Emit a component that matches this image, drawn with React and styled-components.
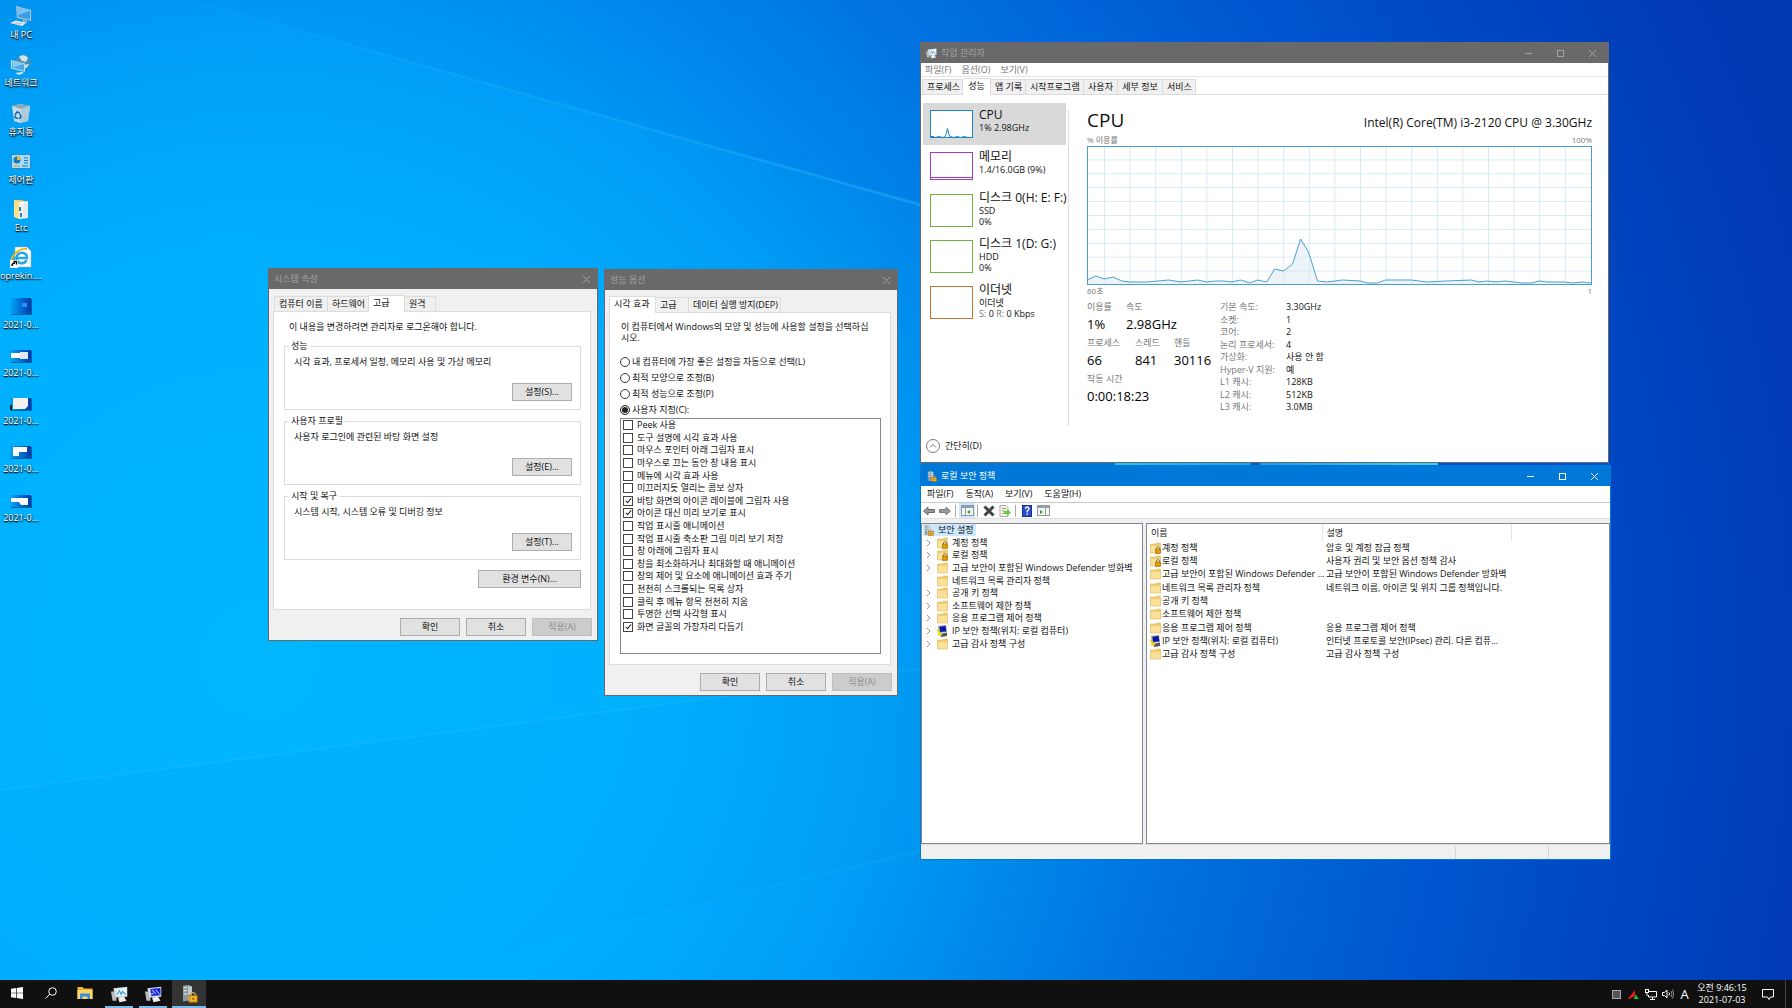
import React from "react";
import styled, { createGlobalStyle, css } from "styled-components";

const GlobalStyle = createGlobalStyle`
  *, *::before, *::after { box-sizing: border-box; }
  body { margin: 0; }
  body, button, input, table {
    font-family: "Open Sans", "Noto Sans CJK KR", sans-serif;
    font-size: 9px;
    line-height: 12px;
    color: #111;
  }
  ul, dl, dd, p, h2, h3 { margin: 0; padding: 0; font-weight: 400; }
  ul { list-style: none; }
  button { padding: 0; border: 0; background: none; white-space: nowrap; }
  svg { display: block; flex: none; }
`;

/* ---------- shell ---------- */
const Page = styled.div`
  display: flex;
  flex-direction: column;
  min-height: 100vh;
`;
const Desktop = styled.main`
  position: relative;
  flex: 1;
  display: flex;
  overflow: hidden;
  background: #0078e0;
`;
const WallpaperLayer = styled.svg`
  position: absolute;
  inset: 0;
  width: 100%;
  height: 100%;
`;
const IconColumn = styled.ul`
  position: relative;
  display: grid;
  grid-template-rows: repeat(11, 1fr);
  width: 42px;
  height: 531px;
`;
const Shortcut = styled.a`
  display: flex;
  flex-direction: column;
  align-items: center;
  padding-top: 5px;
  gap: 2px;
  color: #fff;
  text-decoration: none;
  white-space: nowrap;
  text-shadow: 0 1px 1px #000, 1px 1px 2px rgba(0, 0, 0, 0.8);
`;

/* ---------- window frame ---------- */
const Frame = styled.section`
  position: absolute;
  left: ${(p) => p.$x}px;
  top: ${(p) => p.$y}px;
  width: ${(p) => p.$w}px;
  ${(p) => p.$h && css`height: ${p.$h}px;`}
  display: flex;
  flex-direction: column;
  background: #fff;
  border: 1px solid ${(p) => (p.$active ? "#0078d7" : "#696969")};
`;
const TitleBar = styled.header`
  display: flex;
  align-items: center;
  flex: none;
  height: 20px;
  padding-left: 5px;
  background: ${(p) => (p.$active ? "#0078d7" : "#696969")};
  color: ${(p) => (p.$active ? "#fff" : "#a3a3a3")};
  & > svg { margin-right: 4px; }
`;
const Title = styled.h2`
  flex: 1;
  font-size: 9px;
  line-height: 12px;
`;
const Control = styled.button`
  display: flex;
  align-items: center;
  justify-content: center;
  width: ${(p) => (p.$narrow ? 22 : 32)}px;
  height: 20px;
  color: inherit;
`;
const Body = styled.div`
  padding: 6px 5px 4px 4px;
  background: #f0f0f0;
`;
const TabList = styled.div`
  display: flex;
  align-items: flex-end;
  height: 17px;
  margin-bottom: -1px;
  padding-left: ${(p) => p.$inset || 0}px;
  position: relative;
`;
const Tab = styled.button`
  width: ${(p) => p.$w}px;
  height: ${(p) => (p.$on ? 17 : 15)}px;
  margin-bottom: ${(p) => (p.$on ? 0 : 1)}px;
  padding: ${(p) => (p.$on ? "0 4px 2px" : "0 4px")};
  border: 1px solid #dcdcdc;
  border-bottom: 0;
  & + & { border-left-width: ${(p) => (p.$on ? 1 : 0)}px; }
  background: ${(p) => (p.$on ? "#fff" : "#f0f0f0")};
  text-align: ${(p) => p.$align || "left"};
`;
const Sheet = styled.div`
  display: flex;
  flex-direction: column;
  margin-right: 1px;
  padding: ${(p) => p.$pad};
  background: #fff;
  border: 1px solid #dcdcdc;
`;
const PushButton = styled.button`
  width: ${(p) => p.$w || 60}px;
  height: 18px;
  align-self: flex-end;
  background: ${(p) => (p.disabled ? "#ccc" : "#e1e1e1")};
  border: 1px solid ${(p) => (p.disabled ? "#bfbfbf" : "#adadad")};
  color: ${(p) => (p.disabled ? "#8c8c8c" : "#111")};
  line-height: 14px;
`;
const Actions = styled.footer`
  display: flex;
  justify-content: flex-end;
  gap: 6px;
  padding-top: 8px;
`;

/* ---------- system properties ---------- */
const Notice = styled.p`
  padding-left: 5px;
  margin-bottom: 7px;
`;
const Group = styled.fieldset`
  display: flex;
  flex-direction: column;
  min-width: 0;
  margin: 0 0 5px;
  padding: 4px 8px 8px 9px;
  border: 1px solid #dcdcdc;
  legend { margin-left: -5px; padding: 0 2px; }
  p { margin-bottom: 15px; }
`;
const Spacer = styled.div`
  height: ${(p) => p.$h}px;
`;

/* ---------- performance options ---------- */
const Intro = styled.p`
  margin: 0 8px 11px 1px;
  line-height: 11px;
`;
const Choice = styled.label`
  display: flex;
  align-items: center;
  height: ${(p) => (p.$row ? "auto" : "16px")};
  gap: ${(p) => (p.$row ? 4 : 2)}px;
`;
const Radio = styled.input.attrs({ type: "radio" })`
  appearance: none;
  width: 10px;
  height: 10px;
  margin: 0;
  border: 1px solid #333;
  border-radius: 50%;
  background: #fff;
  &:checked { box-shadow: inset 0 0 0 1px #fff; background: #222; }
`;
const Check = styled.input.attrs({ type: "checkbox" })`
  appearance: none;
  display: flex;
  justify-content: center;
  width: 10px;
  height: 10px;
  margin: 0;
  border: 1px solid #444;
  background: #fff;
  &:checked::after {
    content: "";
    width: 3px;
    height: 6px;
    border: solid #222;
    border-width: 0 1px 1px 0;
    transform: rotate(40deg);
  }
`;
const EffectBox = styled.div`
  height: 236px;
  padding-left: 2px;
  border: 1px solid #828790;
`;
const EffectRows = styled.div`
  display: grid;
  grid-auto-rows: 1fr;
  height: 214px;
`;

/* ---------- menus ---------- */
const MenuBar = styled.nav`
  display: flex;
  align-items: center;
  flex: none;
  gap: ${(p) => (p.$active ? 12 : 10)}px;
  height: ${(p) => (p.$active ? 17 : 14)}px;
  padding-left: ${(p) => (p.$active ? 6 : 4)}px;
  border-bottom: 1px solid ${(p) => (p.$active ? "#c8c8c8" : "#e6e6e6")};
  button { color: ${(p) => (p.$active ? "#111" : "#777")}; }
`;

/* ---------- task manager ---------- */
const TaskTabs = styled.div`
  padding-top: 1px;
  flex: none;
`;
const Monitor = styled.div`
  flex: 1;
  display: flex;
  border-top: 1px solid #dcdcdc;
`;
const Resources = styled.ul`
  width: 145px;
  flex: none;
  padding: 8px 0 0 2px;
`;
const Resource = styled.button`
  display: flex;
  gap: 6px;
  width: 143px;
  height: ${(p) => (p.$tall ? 46 : 42)}px;
  padding: ${(p) => (p.$tall ? 3 : 4)}px 0 0 7px;
  text-align: left;
  background: ${(p) => (p.$on ? "#d9d9d9" : "transparent")};
  svg { margin-top: ${(p) => (p.$tall ? 4 : 3)}px; }
`;
const ResourceText = styled.span`
  display: flex;
  flex-direction: column;
  line-height: 11px;
  strong { font-size: 12px; line-height: 15px; font-weight: 400; }
  i { color: #777; font-style: normal; }
`;
const Divider = styled.div`
  width: 1px;
  margin: 15px 0 0 2px;
  background: #dcdcdc;
`;
const Details = styled.div`
  flex: 1;
  padding: 12px 16px 0 18px;
`;
const DetailHead = styled.div`
  display: flex;
  justify-content: space-between;
  align-items: baseline;
  height: 27px;
  h3 { font-size: 19px; line-height: 26px; }
  span { font-size: 12px; }
`;
const AxisRow = styled.div`
  display: flex;
  justify-content: space-between;
  font-size: 8px;
  line-height: 12px;
  color: #777;
`;
const GraphSvg = styled.svg`
  width: 100%;
  height: 139px;
`;
const Figures = styled.div`
  display: flex;
  padding-top: 4px;
`;
const FigureBlock = styled.div`
  width: 133px;
  display: flex;
  flex-direction: column;
  gap: 4px;
`;
const FigureRow = styled.dl`
  display: grid;
  grid-template-columns: ${(p) => p.$cols};
  dt { color: #777; white-space: nowrap; }
  dd { margin-top: 2px; font-size: 13px; line-height: 18px; white-space: nowrap; color: #000; }
`;
const Facts = styled.dl`
  display: grid;
  grid-auto-rows: 1fr;
  height: 113px;
  div { display: grid; grid-template-columns: 66px auto; }
  dt { color: #777; white-space: nowrap; }
`;
const Fewer = styled.button`
  display: flex;
  align-items: center;
  align-self: flex-start;
  gap: 5px;
  height: 36px;
  padding: 3px 0 0 5px;
`;

/* ---------- security policy ---------- */
const ToolBar = styled.div`
  display: flex;
  align-items: center;
  flex: none;
  height: 15px;
`;
const Tool = styled.button`
  display: flex;
  align-items: center;
  justify-content: center;
  width: 16px;
  height: 15px;
  background: ${(p) => (p.$on ? "#cce8ff" : "none")};
`;
const ToolGap = styled.span`
  width: 1px;
  height: 12px;
  margin: 0 3px 0 2px;
  background: #aaa;
`;
const Strip = styled.div`
  flex: none;
  height: 5px;
  background: #f0f0f0;
  border-top: 1px solid #e0e0e0;
`;
const Panes = styled.div`
  flex: 1;
  display: flex;
  gap: 3px;
  background: #f0f0f0;
`;
const Pane = styled.div`
  ${(p) => (p.$w ? css`width: ${p.$w}px; flex: none;` : css`flex: 1;`)}
  background: #fff;
  border: 1px solid #828790;
`;
const Tree = styled.ul`
  display: grid;
  grid-auto-rows: 1fr;
  height: 126px;
`;
const Node = styled.li`
  display: flex;
  align-items: center;
  padding-left: ${(p) => (p.$root ? 1 : 4)}px;
`;
const Twist = styled.span`
  display: flex;
  width: 11px;
`;
const NodeButton = styled.button`
  display: flex;
  align-items: center;
  gap: 4px;
  height: 12px;
  padding-right: 3px;
  background: ${(p) => (p.$on ? "#cce8ff" : "none")};
`;
const PolicyTable = styled.table`
  width: 100%;
  border-collapse: collapse;
  table-layout: fixed;
  height: 137px;
  th, td { padding: 0 0 0 4px; text-align: left; font-weight: 400; white-space: nowrap; }
  thead tr { height: 17px; }
  th { border-right: 1px solid #e5e5e5; }
  th:last-child { border-right: 0; }
  td:first-child { padding-left: 3px; }
`;
const NameCell = styled.span`
  display: flex;
  align-items: center;
  gap: 1px;
`;
const StatusBar = styled.footer`
  display: flex;
  flex: none;
  height: 15px;
  background: #f0f0f0;
  border-top: 1px solid #dcdcdc;
  span { border-left: 1px solid #d5d5d5; margin-top: 1px; }
  span:nth-child(1) { flex: 1; border: 0; }
  span:nth-child(2) { width: 93px; }
  span:nth-child(3) { width: 62px; }
`;
const Sliver = styled.div`
  position: absolute;
  left: 921px;
  top: 463px;
  width: 689px;
  height: 2px;
  background: linear-gradient(90deg, #0078d7 194px, #22c4f2 194px, #18a8e8 330px, #0a58c0 330px, #0a58c0 339px, #1f9fe6 339px, #3fd0ee 517px, #0050d8 517px);
`;

/* ---------- taskbar ---------- */
const TaskBar = styled.footer`
  display: flex;
  height: 28px;
  background: #101010;
`;
const TaskButton = styled.button`
  display: flex;
  align-items: center;
  justify-content: center;
  width: 34px;
  padding-bottom: ${(p) => (p.$open ? 0 : 2)}px;
  margin-left: ${(p) => (p.$on ? 2 : 0)}px;
  background: ${(p) => (p.$on ? "#333" : "none")};
  ${(p) => p.$open && css`
    background-image: linear-gradient(#76b9ed, #76b9ed);
    background-size: ${p.$on ? 34 : 28}px 2px;
    background-position: bottom center;
    background-repeat: no-repeat;
  `}
`;
const Tray = styled.div`
  display: flex;
  align-items: center;
  margin-left: auto;
`;
const TrayButton = styled.button`
  display: flex;
  align-items: center;
  justify-content: center;
  width: ${(p) => p.$w || 17}px;
  height: 28px;
  color: #fff;
  font-size: 13px;
`;
const Clock = styled.button`
  width: 58px;
  color: #fff;
  text-align: center;
  span { display: block; }
`;
const ShowDesktop = styled.button`
  width: 7px;
  height: 28px;
  border-left: 1px solid #444;
`;

/* ---------- drawings ---------- */
const Wallpaper = () => (
  <WallpaperLayer viewBox="0 0 1792 980" preserveAspectRatio="none" aria-hidden="true">
    <defs>
      <radialGradient id="sky" gradientUnits="userSpaceOnUse" cx="260" cy="660" r="1600">
        <stop offset="0" stopColor="#00b6ff" />
        <stop offset="0.25" stopColor="#00b0ff" />
        <stop offset="0.4" stopColor="#009cf5" />
        <stop offset="0.5" stopColor="#0084e8" />
        <stop offset="0.6" stopColor="#006edd" />
        <stop offset="0.75" stopColor="#0054cf" />
        <stop offset="0.86" stopColor="#0046c2" />
        <stop offset="1" stopColor="#0038b2" />
      </radialGradient>
      <linearGradient id="beam" x1="0" y1="0" x2="1" y2="0">
        <stop offset="0" stopColor="#3cf" stopOpacity="0.05" />
        <stop offset="1" stopColor="#3bf" stopOpacity="0.4" />
      </linearGradient>
      <linearGradient id="shade" x1="0" y1="0" x2="1" y2="0">
        <stop offset="0" stopColor="#0070e8" stopOpacity="0.05" />
        <stop offset="1" stopColor="#0060e0" stopOpacity="0.2" />
      </linearGradient>
    </defs>
    <rect width="1792" height="980" fill="url(#sky)" />
    <polygon points="190,0 1100,0 1100,256" fill="url(#shade)" />
    <polygon points="185,0 192,0 930,206 930,209" fill="url(#beam)" />
    <polygon points="0,790 720,697 920,669 920,852 560,937 420,980 0,980" fill="#0098e8" opacity="0.08" />
    <polygon points="0,789 720,696 920,668 920,670 720,698 0,791" fill="#5cf" opacity="0.14" />
    <polygon points="560,936 920,850 920,852 560,937" fill="#5cf" opacity="0.12" />
  </WallpaperLayer>
);

const MiniPc = ({ size = 22 }) => (
  <svg width={size} height={size} viewBox="0 0 22 22">
    <path d="M6 1l15 4v11L7 13z" fill="#b9c6ce" />
    <path d="M7 2.300l13 3.500v9L8 12z" fill="#3b9fe6" />
    <path d="M7 2.300l13 3.500L8 10z" fill="#79c2f4" />
    <path d="M13 15l4 1v2l-5-1z" fill="#aeb7bd" />
    <path d="M0 18l6-2.500 10 2.500-4 3z" fill="#e9edef" />
    <path d="M3 18.200l3-1 7 1.300-2 1z" fill="#b9c2c8" />
  </svg>
);
const NetworkIcon = () => (
  <svg width="22" height="22" viewBox="0 0 22 22">
    <circle cx="13.500" cy="9" r="7.500" fill="#4590b4" />
    <path d="M9 4c3-3 7-2 9 1l-2 4-4-1zM14 12l5-1c-1 3-3 4-5 5z" fill="#cde6ef" />
    <path d="M1 7l14 3.500V19L1 15.500z" fill="#d0d8dd" />
    <path d="M2 8.300l12 3v6.400l-12-3z" fill="#4aa9e8" />
    <path d="M2 8.300l12 3-11 3z" fill="#83c8f3" />
    <path d="M5 20l7-1 2 1-5 2z" fill="#dbe1e5" />
  </svg>
);
const BinIcon = () => (
  <svg width="22" height="22" viewBox="0 0 22 22">
    <path d="M2 4l8-2 10 2-2 15-8 2-6-2z" fill="#c8dce8" />
    <path d="M2 4l8-2 10 2-9 3z" fill="#86a9bd" />
    <path d="M11 7l9-3-2 15-8 2z" fill="#aecbdb" />
    <path d="M5 13l2-3 3 1M10 12l1 3-2 2M8 16.500l-3-1v-2" stroke="#0b64b4" strokeWidth="1.500" fill="none" />
  </svg>
);
const PanelIcon = () => (
  <svg width="22" height="22" viewBox="0 0 22 22">
    <rect x="1" y="4" width="20" height="15" fill="#2c88c7" />
    <rect x="2" y="5" width="18" height="13" fill="#a6dcf6" />
    <circle cx="7" cy="10" r="3.500" fill="#1478c2" />
    <path d="M7 10V6.500A3.500 3.500 0 0 1 10.500 10z" fill="#ffb900" />
    <path d="M14 8h4M14 10.500h4M14 13h4" stroke="#1478c2" />
    <path d="M4 16h6" stroke="#ff9c00" />
    <path d="M12 16h6" stroke="#1478c2" />
  </svg>
);
const EtcIcon = () => (
  <svg width="22" height="22" viewBox="0 0 22 22">
    <path d="M4 2h8l2 1v16H4z" fill="#f3c95a" />
    <path d="M9 4l9-1v17l-9 1z" fill="#f7f9fa" />
    <path d="M4 2l5 2v17l-5-2z" fill="#ffe08a" />
    <path d="M13 6l5-1v14l-5 1z" fill="#e4eaee" />
    <path d="M10 9v4M11 15v4" stroke="#1b82c9" strokeWidth="2" />
  </svg>
);
const IeIcon = () => (
  <svg width="22" height="22" viewBox="0 0 22 22">
    <path d="M5 1h12l4 4v16H5z" fill="#fff" stroke="#9aa" strokeWidth="0.500" />
    <path d="M6 12h11c0-7-10-7-10.500 0 0 6 8 7 10 2" fill="none" stroke="#27a6e5" strokeWidth="2.600" />
    <path d="M2 17C-1 14 6 2 17 3" fill="none" stroke="#f5b800" strokeWidth="1.800" />
    <rect x="0" y="14" width="8" height="8" fill="#fff" />
    <path d="M2 20c0-2 1-3 3-3M3.500 15.500h3v3" fill="none" stroke="#000" strokeWidth="1.400" />
  </svg>
);
const Shot = ({ shapes, tall }) => (
  <svg width="22" height="22" viewBox="0 0 22 22">
    <defs>
      <linearGradient id="shotfill" x1="0" x2="1"><stop offset="0" stopColor="#00a8f8" /><stop offset="1" stopColor="#0038b0" /></linearGradient>
    </defs>
    <rect x="1" y={tall ? 4 : 8} width="21" height={tall ? 16 : 12} fill="#023" opacity="0.500" />
    <rect x="0" y={tall ? 3 : 7} width="21" height={tall ? 16 : 12} fill="url(#shotfill)" />
    {shapes.map((s, i) => <path key={i} d={s[0]} fill={s[1]} />)}
  </svg>
);
const FolderIcon = ({ lock }) => (
  <svg width="11" height="12" viewBox="0 0 11 12">
    <path d="M0.500 2h5l1-1h4v10h-10z" fill="#f3cd6c" stroke="#d3b05a" strokeWidth="0.500" />
    <path d="M1 4h9v6.500H1z" fill="#fbe09a" />
    {lock && <g><path d="M6.500 7.500v-2q1.500-2 3 0v2" fill="none" stroke="#777" strokeWidth="1" /><rect x="5.500" y="7" width="5" height="4.500" fill="#e39a00" stroke="#8a5b00" strokeWidth="0.500" /></g>}
  </svg>
);
const IpIcon = () => (
  <svg width="11" height="12" viewBox="0 0 11 12">
    <path d="M1 1l8-1 1 7-8 1z" fill="#999" />
    <path d="M2.500 1.800l6-.8.8 5.200-6 .8z" fill="#0a18a8" />
    <path d="M3 9l7-1.500V11l-6 1z" fill="#555" />
    <path d="M0.500 4.500L3 9M1 9.500h4" stroke="#e8d800" strokeWidth="1.800" fill="none" />
  </svg>
);
const ServerIcon = ({ size = 12 }) => (
  <svg width={size} height={size} viewBox="0 0 24 24">
    <path d="M4 1l6-1v21l-6 1z" fill="#8d979c" />
    <path d="M10 0l6 2v20l-6-1z" fill="#c3cacd" />
    <path d="M5 4l4-1M5 8l4-1M5 12h4" stroke="#e8f4e8" strokeWidth="1.500" />
    <path d="M14.500 15v-3q3-4 6 0v3" fill="none" stroke="#b8a070" strokeWidth="2" />
    <rect x="12" y="14" width="11" height="9" fill="#f0ae26" stroke="#9a6500" />
    <path d="M17.500 17v3" stroke="#7a4d00" strokeWidth="1.500" />
  </svg>
);
const MonitorIcon = ({ size = 11, blue }) => (
  <svg width={size} height={size} viewBox="0 0 22 22">
    <path d="M0 7h7v12H2z" fill="#b7bcbf" />
    <path d="M3 3l18-2v13L6 15z" fill="#d9dde0" />
    <path d="M7 4l13-1.500V12L8 13z" fill={blue ? "#1522d8" : "#e9f6fd"} />
    {blue
      ? <path d="M9 5l5 5M14 5l5 6M8 11l3-2" stroke="#a9b4ff" strokeWidth="1.400" />
      : <path d="M8 11l3-5 2 5 2-4 4 4" fill="none" stroke="#37a0d8" strokeWidth="1.400" />}
    <path d="M9 15l8-1 3 5-9 2z" fill="#eceeef" />
  </svg>
);
const Glyph = ({ kind }) => (
  <svg width="9" height="9" viewBox="0 0 9 9" fill="none" stroke="currentColor">
    {kind === "min" && <path d="M1 4.500h7" />}
    {kind === "max" && <rect x="1.500" y="1.500" width="6" height="6" />}
    {kind === "close" && <path d="M1 1l7 7M8 1l-7 7" />}
  </svg>
);

const CPU_POINTS = "0,134 9,130 17,133 26,131 35,135 43,136 60,136 82,134 94,136 111,134 120,136 129,135 137,135 145,136 154,134 163,137 171,134 180,136 188,123 197,125 206,118 214,93 222,106 231,135 241,136 256,134 274,135 281,137 291,137 299,134 325,134 341,136 360,135 385,134 393,136 401,135 410,136 419,135 436,137 445,137 453,135 461,136 478,136 487,137 496,136 505,137";
const range = (n) => Array.from({ length: n }, (_, i) => i);

const CpuGraph = () => (
  <GraphSvg viewBox="0 0 506 139" preserveAspectRatio="none">
    <rect width="506" height="139" fill="#fff" />
    {range(19).map((i) => <path key={i} d={`M${17.5 + i * 25.65} 0V139`} stroke="#d9eaf4" />)}
    {range(9).map((i) => <path key={i} d={`M0 ${13.9 * (i + 1)}H506`} stroke="#d9eaf4" />)}
    <polygon points={`0,138 ${CPU_POINTS} 505,138`} fill="#dce9f3" opacity="0.5" />
    <polyline points={CPU_POINTS} fill="none" stroke="#4ba0d0" />
    <rect x="0.5" y="0.5" width="505" height="138" fill="none" stroke="#4a9fd0" />
  </GraphSvg>
);
const Thumb = ({ color, h, kind }) => (
  <svg width="43" height={h} viewBox={`0 0 43 ${h}`} fill="none" stroke={color}>
    <rect x="0.5" y="0.5" width="42" height={h - 1} fill="#fff" />
    {kind === "cpu" && <path d="M1 26.500h3l1 1 4-1 4 1 2-1 1-2 1.500-6 1.500 6 1 2 4 1 3-1 4 1 3-1 4 1" />}
    {kind === "mem" && <path d="M1 25.500h41" />}
  </svg>
);

/* ---------- content ---------- */
const SHORTCUTS = [
  ["내 PC", <MiniPc />],
  ["네트워크", <NetworkIcon />],
  ["휴지통", <BinIcon />],
  ["제어판", <PanelIcon />],
  ["Etc", <EtcIcon />],
  ["oprekin....", <IeIcon />],
  ["2021-0...", <Shot tall shapes={[["M12 8h5v4h-5z", "#2a90f0"]]} />],
  ["2021-0...", <Shot shapes={[["M1 10h10v5H1z", "#fff"], ["M10 9h8v7h-8z", "#dfe8f2"]]} />],
  ["2021-0...", <Shot shapes={[["M3 7h15v8l-3 3H3z", "#f2f2f2"], ["M0 14h2v5H0z", "#222"]]} />],
  ["2021-0...", <Shot shapes={[["M3 8h14v5H9v4H3z", "#fff"]]} />],
  ["2021-0...", <Shot shapes={[["M1 10h17v7h-7l-2-3H1z", "#fff"]]} />],
];
const GROUPS = [
  ["성능", "시각 효과, 프로세서 일정, 메모리 사용 및 가상 메모리", "설정(S)..."],
  ["사용자 프로필", "사용자 로그인에 관련된 바탕 화면 설정", "설정(E)..."],
  ["시작 및 복구", "시스템 시작, 시스템 오류 및 디버깅 정보", "설정(T)..."],
];
const MODES = [
  "내 컴퓨터에 가장 좋은 설정을 자동으로 선택(L)",
  "최적 모양으로 조정(B)",
  "최적 성능으로 조정(P)",
  "사용자 지정(C):",
];
const EFFECTS = [
  ["Peek 사용"], ["도구 설명에 시각 효과 사용"], ["마우스 포인터 아래 그림자 표시"],
  ["마우스로 끄는 동안 창 내용 표시"], ["메뉴에 시각 효과 사용"], ["미끄러지듯 열리는 콤보 상자"],
  ["바탕 화면의 아이콘 레이블에 그림자 사용", true], ["아이콘 대신 미리 보기로 표시", true],
  ["작업 표시줄 애니메이션"], ["작업 표시줄 축소판 그림 미리 보기 저장"], ["창 아래에 그림자 표시"],
  ["창을 최소화하거나 최대화할 때 애니메이션"], ["창의 제어 및 요소에 애니메이션 효과 주기"],
  ["천천히 스크롤되는 목록 상자"], ["클릭 후 메뉴 항목 천천히 지움"], ["투명한 선택 사각형 표시"],
  ["화면 글꼴의 가장자리 다듬기", true],
];
const FACTS = [
  ["기본 속도:", "3.30GHz"], ["소켓:", "1"], ["코어:", "2"], ["논리 프로세서:", "4"],
  ["가상화:", "사용 안 함"], ["Hyper-V 지원:", "예"], ["L1 캐시:", "128KB"],
  ["L2 캐시:", "512KB"], ["L3 캐시:", "3.0MB"],
];
const POLICIES = [
  { name: "계정 정책", desc: "암호 및 계정 잠금 정책", icon: <FolderIcon lock />, open: true },
  { name: "로컬 정책", desc: "사용자 권리 및 보안 옵션 정책 감사", icon: <FolderIcon lock />, open: true },
  { name: "고급 보안이 포함된 Windows Defender 방화벽", short: "고급 보안이 포함된 Windows Defender ...", desc: "고급 보안이 포함된 Windows Defender 방화벽", icon: <FolderIcon />, open: true },
  { name: "네트워크 목록 관리자 정책", desc: "네트워크 이름, 아이콘 및 위치 그룹 정책입니다.", icon: <FolderIcon /> },
  { name: "공개 키 정책", desc: "", icon: <FolderIcon />, open: true },
  { name: "소프트웨어 제한 정책", desc: "", icon: <FolderIcon />, open: true },
  { name: "응용 프로그램 제어 정책", desc: "응용 프로그램 제어 정책", icon: <FolderIcon />, open: true },
  { name: "IP 보안 정책(위치: 로컬 컴퓨터)", desc: "인터넷 프로토콜 보안(IPsec) 관리. 다른 컴퓨...", icon: <IpIcon />, open: true },
  { name: "고급 감사 정책 구성", desc: "고급 감사 정책 구성", icon: <FolderIcon />, open: true },
];

/* ---------- windows ---------- */
const Buttons = () => (
  <Actions>
    <PushButton>확인</PushButton>
    <PushButton>취소</PushButton>
    <PushButton disabled>적용(A)</PushButton>
  </Actions>
);
const Controls = () => (
  <>
    <Control aria-label="최소화"><Glyph kind="min" /></Control>
    <Control aria-label="최대화"><Glyph kind="max" /></Control>
    <Control aria-label="닫기"><Glyph kind="close" /></Control>
  </>
);

const SystemProperties = () => (
  <Frame $x={268} $y={268} $w={330}>
    <TitleBar>
      <Title>시스템 속성</Title>
      <Control $narrow aria-label="닫기"><Glyph kind="close" /></Control>
    </TitleBar>
    <Body>
      <TabList role="tablist" $inset={1}>
        <Tab role="tab" $w={54}>컴퓨터 이름</Tab>
        <Tab role="tab" $w={41}>하드웨어</Tab>
        <Tab role="tab" $w={36} $on aria-selected="true">고급</Tab>
        <Tab role="tab" $w={31}>원격</Tab>
      </TabList>
      <Sheet $pad="9px 9px 21px 10px">
        <Notice>이 내용을 변경하려면 관리자로 로그온해야 합니다.</Notice>
        {GROUPS.map(([name, text, action]) => (
          <Group key={name}>
            <legend>{name}</legend>
            <p>{text}</p>
            <PushButton>{action}</PushButton>
          </Group>
        ))}
        <Spacer $h={5} />
        <PushButton $w={103}>환경 변수(N)...</PushButton>
      </Sheet>
      <Buttons />
    </Body>
  </Frame>
);

const PerformanceOptions = () => (
  <Frame $x={604} $y={269} $w={294}>
    <TitleBar>
      <Title>성능 옵션</Title>
      <Control $narrow aria-label="닫기"><Glyph kind="close" /></Control>
    </TitleBar>
    <Body>
      <TabList role="tablist">
        <Tab role="tab" $w={47} $on aria-selected="true">시각 효과</Tab>
        <Tab role="tab" $w={33}>고급</Tab>
        <Tab role="tab" $w={92}>데이터 실행 방지(DEP)</Tab>
      </TabList>
      <Sheet $pad="8px 9px 10px 10px">
        <Intro>이 컴퓨터에서 Windows의 모양 및 성능에 사용할 설정을 선택하십<br />시오.</Intro>
        {MODES.map((m, i) => (
          <Choice key={m}><Radio name="mode" defaultChecked={i === 3} />{m}</Choice>
        ))}
        <EffectBox>
          <EffectRows>
            {EFFECTS.map(([text, on]) => (
              <Choice $row key={text}><Check defaultChecked={!!on} />{text}</Choice>
            ))}
          </EffectRows>
        </EffectBox>
      </Sheet>
      <Buttons />
    </Body>
  </Frame>
);

const TaskManager = () => (
  <Frame $x={920} $y={42} $w={689} $h={421}>
    <TitleBar>
      <MonitorIcon />
      <Title>작업 관리자</Title>
      <Controls />
    </TitleBar>
    <MenuBar>
      <button>파일(F)</button><button>옵션(O)</button><button>보기(V)</button>
    </MenuBar>
    <TaskTabs>
      <TabList role="tablist" $inset={1}>
        <Tab role="tab" $align="center" $w={41}>프로세스</Tab>
        <Tab role="tab" $align="center" $w={28} $on aria-selected="true">성능</Tab>
        <Tab role="tab" $align="center" $w={35}>앱 기록</Tab>
        <Tab role="tab" $align="center" $w={58}>시작프로그램</Tab>
        <Tab role="tab" $align="center" $w={34}>사용자</Tab>
        <Tab role="tab" $align="center" $w={45}>세부 정보</Tab>
        <Tab role="tab" $align="center" $w={33}>서비스</Tab>
      </TabList>
    </TaskTabs>
    <Monitor>
      <Resources>
        <li><Resource $on><Thumb color="#1f86bf" h={28} kind="cpu" /><ResourceText><strong>CPU</strong><span>1% 2.98GHz</span></ResourceText></Resource></li>
        <li><Resource><Thumb color="#a03cc4" h={28} kind="mem" /><ResourceText><strong>메모리</strong><span>1.4/16.0GB (9%)</span></ResourceText></Resource></li>
        <li><Resource $tall><Thumb color="#6db33f" h={33} /><ResourceText><strong>디스크 0(H: E: F:)</strong><span>SSD</span><span>0%</span></ResourceText></Resource></li>
        <li><Resource $tall><Thumb color="#6db33f" h={33} /><ResourceText><strong>디스크 1(D: G:)</strong><span>HDD</span><span>0%</span></ResourceText></Resource></li>
        <li><Resource $tall><Thumb color="#bf7430" h={33} /><ResourceText><strong>이더넷</strong><span>이더넷</span><span><i>S:</i> 0 <i>R:</i> 0 Kbps</span></ResourceText></Resource></li>
      </Resources>
      <Divider />
      <Details>
        <DetailHead><h3>CPU</h3><span>Intel(R) Core(TM) i3-2120 CPU @ 3.30GHz</span></DetailHead>
        <AxisRow><span>% 이용률</span><span>100%</span></AxisRow>
        <CpuGraph />
        <AxisRow><span>60초</span><span>1</span></AxisRow>
        <Figures>
          <FigureBlock>
            <FigureRow $cols="39px auto">
              <div><dt>이용률</dt><dd>1%</dd></div>
              <div><dt>속도</dt><dd>2.98GHz</dd></div>
            </FigureRow>
            <FigureRow $cols="48px 39px auto">
              <div><dt>프로세스</dt><dd>66</dd></div>
              <div><dt>스레드</dt><dd>841</dd></div>
              <div><dt>핸들</dt><dd>30116</dd></div>
            </FigureRow>
            <FigureRow $cols="auto">
              <div><dt>작동 시간</dt><dd>0:00:18:23</dd></div>
            </FigureRow>
          </FigureBlock>
          <Facts>
            {FACTS.map(([k, v]) => <div key={k}><dt>{k}</dt><dd>{v}</dd></div>)}
          </Facts>
        </Figures>
      </Details>
    </Monitor>
    <Fewer>
      <svg width="14" height="14" viewBox="0 0 14 14" fill="none" stroke="#777">
        <circle cx="7" cy="7" r="6.500" /><path d="M4 8.500l3-3 3 3" />
      </svg>
      간단히(D)
    </Fewer>
  </Frame>
);

const ListGlyph = ({ right }) => (
  <svg width="13" height="11" viewBox="0 0 13 11">
    <rect x="0.500" y="0.500" width="12" height="10" fill="#f4f4f4" stroke="#999" />
    <path d="M1 2h11" stroke="#8fa0b0" strokeWidth="2" />
    <path d={right ? "M8.500 3v7" : "M4.500 3v7"} stroke="#999" />
    <path d={right ? "M3 5l3 2-3 2z" : "M9 5L6 7l3 2z"} fill="#2ca02c" />
  </svg>
);

const SecurityPolicy = () => (
  <Frame $active $x={920} $y={465} $w={691} $h={395}>
    <TitleBar $active>
      <ServerIcon size={11} />
      <Title>로컬 보안 정책</Title>
      <Controls />
    </TitleBar>
    <MenuBar $active>
      <button>파일(F)</button><button>동작(A)</button><button>보기(V)</button><button>도움말(H)</button>
    </MenuBar>
    <ToolBar>
      <Tool aria-label="뒤로"><svg width="12" height="10" viewBox="0 0 12 10"><path d="M0.500 5L5 1v2.500h6.500v3H5V9z" fill="#999" stroke="#666" /></svg></Tool>
      <Tool aria-label="앞으로"><svg width="12" height="10" viewBox="0 0 12 10"><path d="M11.500 5L7 1v2.500H0.500v3H7V9z" fill="#999" stroke="#777" /></svg></Tool>
      <ToolGap />
      <Tool $on aria-label="콘솔 트리"><ListGlyph /></Tool>
      <ToolGap />
      <Tool aria-label="삭제"><svg width="12" height="12" viewBox="0 0 12 12"><path d="M1.500 1.500l9 9M10.500 1.500l-9 9" stroke="#444" strokeWidth="3" /></svg></Tool>
      <Tool aria-label="내보내기"><svg width="12" height="12" viewBox="0 0 12 12"><path d="M1 0.500h6l2 2v9H1z" fill="#fdf8e0" stroke="#aaa" /><path d="M3 3.500h4M3 6h3M3 8.500h3" stroke="#999" /><path d="M5 6h3V4l4 3.500L8 11V9H5z" fill="#6cc84c" /></svg></Tool>
      <ToolGap />
      <Tool aria-label="도움말"><svg width="10" height="12" viewBox="0 0 10 12"><rect x="0.500" y="0.500" width="9" height="11" fill="#2a50c8" stroke="#16308a" /><path d="M3.500 4q0-2 1.700-2T7 3.800q0 1.200-1.800 2.200v1.500M5.200 8.500V10" fill="none" stroke="#fff" strokeWidth="1.300" /></svg></Tool>
      <Tool aria-label="작업 창"><ListGlyph right /></Tool>
    </ToolBar>
    <Strip />
    <Panes>
      <Pane $w={222}>
        <Tree>
          <Node $root><NodeButton $on><ServerIcon size={11} />보안 설정</NodeButton></Node>
          {POLICIES.map((p) => (
            <Node key={p.name}>
              <Twist>{p.open && <svg width="5" height="8" viewBox="0 0 5 8" fill="none" stroke="#999"><path d="M1 1l3 3-3 3" /></svg>}</Twist>
              <NodeButton>{p.icon}{p.name}</NodeButton>
            </Node>
          ))}
        </Tree>
      </Pane>
      <Pane>
        <PolicyTable>
          <colgroup><col style={{ width: 175 }} /><col style={{ width: 189 }} /><col /></colgroup>
          <thead><tr><th>이름</th><th>설명</th><th aria-label="여백" /></tr></thead>
          <tbody>
            {POLICIES.map((p) => (
              <tr key={p.name}><td><NameCell>{p.icon}{p.short || p.name}</NameCell></td><td>{p.desc}</td><td /></tr>
            ))}
          </tbody>
        </PolicyTable>
      </Pane>
    </Panes>
    <StatusBar><span /><span /><span /></StatusBar>
  </Frame>
);

const BottomBar = () => (
  <TaskBar>
    <TaskButton aria-label="시작"><svg width="12" height="12" viewBox="0 0 12 12" fill="#fff"><path d="M0 1.800l5-.8v4.700H0zM5.700.9L12 0v5.700H5.700zM0 6.300h5V11l-5-.8zM5.700 6.300H12V12l-6.300-.9z" /></svg></TaskButton>
    <TaskButton aria-label="검색"><svg width="12" height="12" viewBox="0 0 12 12" fill="none" stroke="#fff"><circle cx="7.500" cy="4.500" r="3.800" /><path d="M4.800 7.300L0.500 11.500" /></svg></TaskButton>
    <TaskButton aria-label="파일 탐색기"><svg width="16" height="14" viewBox="0 0 16 14"><path d="M0.500 1h5l1.500 1.500h8.500V13H0.500z" fill="#f2b52c" /><path d="M0.500 4h15v9H0.500z" fill="#fbd768" /><path d="M3 13V7.500h10V13h-2.500v-2.500h-5V13z" fill="#3a90d8" /></svg></TaskButton>
    <TaskButton $open aria-label="작업 관리자"><MonitorIcon size={17} /></TaskButton>
    <TaskButton $open aria-label="시스템 속성"><MonitorIcon size={17} blue /></TaskButton>
    <TaskButton $open $on aria-label="로컬 보안 정책"><ServerIcon size={18} /></TaskButton>
    <Tray>
      <TrayButton aria-label="장치"><svg width="9" height="9" viewBox="0 0 9 9"><rect x="0.500" y="0.500" width="8" height="8" fill="#555" stroke="#aaa" /></svg></TrayButton>
      <TrayButton aria-label="그래픽"><svg width="11" height="9" viewBox="0 0 11 9"><path d="M7 0v4L1.500 9H0z" fill="#f01818" /><path d="M0 8l7-4v2L3 8z" fill="#f01818" /><path d="M7.500 4.500L11 9H6z" fill="#18c832" /></svg></TrayButton>
      <TrayButton aria-label="네트워크"><svg width="12" height="11" viewBox="0 0 12 11" fill="none" stroke="#fff"><path d="M4 2.500h7.500v5.500h-8V6M7.500 8v2M5 10.500h5" /><rect x="0.500" y="0.500" width="3" height="3" /><path d="M2 4v3" /></svg></TrayButton>
      <TrayButton aria-label="볼륨"><svg width="12" height="10" viewBox="0 0 12 10" fill="none" stroke="#fff"><path d="M0.500 3.500h2l2.500-2.500v8L2.500 6.500h-2z" /><path d="M7 3.500q1 1.500 0 3" /><path d="M9 2q2 3 0 6M10.500 0.500q2.500 4.500 0 9" opacity="0.500" /></svg></TrayButton>
      <TrayButton>A</TrayButton>
      <Clock><span>오전 9:46:15</span><span>2021-07-03</span></Clock>
      <TrayButton $w={34} aria-label="알림"><svg width="12" height="12" viewBox="0 0 12 12" fill="none" stroke="#fff"><path d="M0.500 1.500h11v7.500H8.500L7 11.500 5.500 9h-5z" /></svg></TrayButton>
      <ShowDesktop aria-label="바탕 화면 보기" />
    </Tray>
  </TaskBar>
);

export default function App() {
  return (
    <Page>
      <GlobalStyle />
      <Desktop>
        <Wallpaper />
        <IconColumn>
          {SHORTCUTS.map(([label, icon], i) => (
            <li key={i}><Shortcut href="#">{icon}{label}</Shortcut></li>
          ))}
        </IconColumn>
        <SystemProperties />
        <PerformanceOptions />
        <TaskManager />
        <Sliver />
        <SecurityPolicy />
      </Desktop>
      <BottomBar />
    </Page>
  );
}
